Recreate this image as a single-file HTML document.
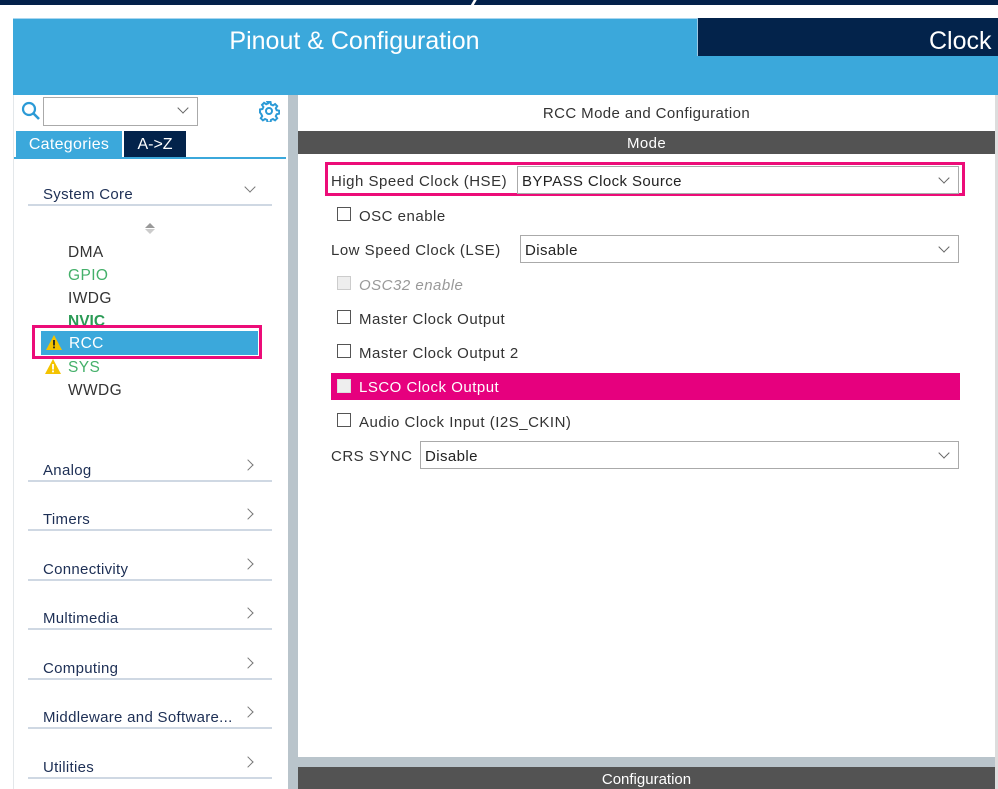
<!DOCTYPE html>
<html><head><meta charset="utf-8"><style>
*{margin:0;padding:0;box-sizing:border-box}
body{width:998px;height:789px;overflow:hidden;background:#fff;font-family:"Liberation Sans",sans-serif;position:relative}
.a{position:absolute}
.cat{position:absolute;left:28px;width:244px;height:26px;border-bottom:2px solid #cfd8e3;color:#1d2f55;font-size:15px;letter-spacing:.3px}
.cat span{position:absolute;left:15px;bottom:1px}
.cat i{position:absolute;right:20px;bottom:11px;width:8px;height:8px;border-right:1.3px solid #777;border-top:1.3px solid #777;transform:rotate(45deg)}
.chk{position:absolute;width:14px;height:14px;border:1.3px solid #555;background:#fff}
.lbl{position:absolute;font-size:15px;color:#333;letter-spacing:.5px}
.sel{position:absolute;height:28px;border:1px solid #aaa;background:#fff;font-size:15px;color:#222;padding:6px 0 0 4px;letter-spacing:.4px}
.sel i{position:absolute;right:10px;top:7px;width:8px;height:8px;border-right:1.3px solid #666;border-bottom:1.3px solid #666;transform:rotate(45deg)}
</style></head><body>
<div class="a" style="left:0;top:0;width:998px;height:5px;background:#03214a"></div>
<div class="a" style="left:472px;top:0;width:3px;height:6px;background:#fff;transform:skewX(-30deg)"></div>
<div class="a" style="left:13px;top:18px;width:985px;height:77px;background:#3ba8db;border-top:1px solid #a8d6ef"></div>
<div class="a" style="left:13px;top:27px;width:683px;text-align:center;color:#fff;font-size:25px">Pinout &amp; Configuration</div>
<div class="a" style="left:697px;top:18px;width:301px;height:38px;background:#03234b;border-left:1px solid #9fc9e3"></div>
<div class="a" style="left:929px;top:27px;color:#fff;font-size:25px">Clock</div>

<div class="a" style="left:13px;top:95px;width:275px;height:694px;background:#fff;border-left:1px solid #e3e7ea"></div>
<svg class="a" style="left:21px;top:101px" width="20" height="20" viewBox="0 0 20 20"><circle cx="8" cy="8" r="6" fill="none" stroke="#2b9ad6" stroke-width="2.2"/><line x1="12.5" y1="12.5" x2="18" y2="18" stroke="#2b9ad6" stroke-width="2.6"/></svg>
<div class="a" style="left:43px;top:97px;width:155px;height:29px;border:1px solid #aaa;background:#fff"></div>
<div class="a" style="left:179px;top:104px;width:8px;height:8px;border-right:1.3px solid #666;border-bottom:1.3px solid #666;transform:rotate(45deg)"></div>
<svg class="a" style="left:258px;top:100px" width="22" height="22" viewBox="0 0 22 22"><g fill="none" stroke="#2b9ad6" stroke-width="2"><circle cx="11" cy="11" r="3"/><path d="M9.5 2h3l.5 2.5 2 .9 2.1-1.4 2.1 2.1-1.4 2.1.9 2 2.5.5v3l-2.5.5-.9 2 1.4 2.1-2.1 2.1-2.1-1.4-2 .9-.5 2.5h-3l-.5-2.5-2-.9-2.1 1.4-2.1-2.1 1.4-2.1-.9-2L2 12.5v-3l2.5-.5.9-2L4 4.9 6.1 2.8l2.1 1.4 2-.9z"/></g></svg>
<div class="a" style="left:16px;top:131px;width:106px;height:26px;background:#3ba8db;color:#fff;font-size:16px;text-align:center;padding-top:5px;letter-spacing:.3px">Categories</div>
<div class="a" style="left:124px;top:131px;width:62px;height:26px;background:#03234b;color:#fff;font-size:16px;text-align:center;padding-top:5px">A-&gt;Z</div>
<div class="a" style="left:14px;top:157px;width:272px;height:2px;background:#3ba8db"></div>

<div class="cat" style="top:180px"><span>System Core</span><i style="transform:rotate(135deg);bottom:13px;right:18px"></i></div>
<div class="a" style="left:145px;top:223px;width:0;height:0;border-left:5px solid transparent;border-right:5px solid transparent;border-bottom:5px solid #999"></div>
<div class="a" style="left:145px;top:229px;width:0;height:0;border-left:5px solid transparent;border-right:5px solid transparent;border-top:5px solid #ccc"></div>
<div class="a" style="left:68px;top:244px;font-size:15.5px;color:#333;letter-spacing:.4px">DMA</div>
<div class="a" style="left:68px;top:267px;font-size:15.5px;color:#44b06a;letter-spacing:.4px">GPIO</div>
<div class="a" style="left:68px;top:290px;font-size:15.5px;color:#333;letter-spacing:.4px">IWDG</div>
<div class="a" style="left:68px;top:313px;font-size:15.5px;color:#2a9a55;font-weight:bold;text-decoration:underline">NVIC</div>
<div class="a" style="left:32px;top:325px;width:230px;height:34px;border:3px solid #ec0c78"></div>
<div class="a" style="left:41px;top:331px;width:217px;height:24px;background:#3ba8db"></div>
<svg class="a" style="left:45px;top:334px" width="18" height="17" viewBox="0 0 18 17"><path d="M9 1L17 16H1z" fill="#f4c300"/><rect x="8.1" y="6" width="1.8" height="5.5" fill="#222"/><rect x="8.1" y="12.5" width="1.8" height="1.8" fill="#222"/></svg>
<div class="a" style="left:69px;top:335px;font-size:15.5px;color:#fff;letter-spacing:.4px">RCC</div>
<svg class="a" style="left:44px;top:358px" width="18" height="17" viewBox="0 0 18 17"><path d="M9 1L17 16H1z" fill="#f4c300"/><rect x="8.1" y="6" width="1.8" height="5.5" fill="#fff"/><rect x="8.1" y="12.5" width="1.8" height="1.8" fill="#fff"/></svg>
<div class="a" style="left:68px;top:359px;font-size:15.5px;color:#44b06a;letter-spacing:.4px">SYS</div>
<div class="a" style="left:68px;top:382px;font-size:15.5px;color:#333;letter-spacing:.4px">WWDG</div>

<div class="cat" style="top:456px"><span>Analog</span><i></i></div>
<div class="cat" style="top:505px"><span>Timers</span><i></i></div>
<div class="cat" style="top:555px"><span>Connectivity</span><i></i></div>
<div class="cat" style="top:604px"><span>Multimedia</span><i></i></div>
<div class="cat" style="top:654px"><span>Computing</span><i></i></div>
<div class="cat" style="top:703px"><span>Middleware and Software...</span><i></i></div>
<div class="cat" style="top:753px"><span>Utilities</span><i></i></div>

<div class="a" style="left:288px;top:95px;width:10px;height:694px;background:#b9c4cb"></div>
<div class="a" style="left:298px;top:95px;width:697px;height:662px;background:#fff"></div>
<div class="a" style="left:995px;top:95px;width:3px;height:694px;background:#ddd"></div>
<div class="a" style="left:298px;top:105px;width:697px;text-align:center;font-size:15px;color:#333;letter-spacing:.4px">RCC Mode and Configuration</div>
<div class="a" style="left:298px;top:131px;width:697px;height:23px;background:#535353;color:#fff;font-size:15px;text-align:center;padding-top:4px;letter-spacing:.4px">Mode</div>

<div class="a" style="left:325px;top:162px;width:640px;height:34px;border:3px solid #ec0c78"></div>
<div class="lbl" style="left:331px;top:173px">High Speed Clock (HSE)</div>
<div class="sel" style="left:517px;top:166px;width:442px">BYPASS Clock Source<i></i></div>

<div class="chk" style="left:337px;top:207px"></div><div class="lbl" style="left:359px;top:208px">OSC enable</div>
<div class="lbl" style="left:331px;top:242px">Low Speed Clock (LSE)</div>
<div class="sel" style="left:520px;top:235px;width:439px">Disable<i></i></div>
<div class="chk" style="left:337px;top:276px;border-color:#ccc;background:#eee"></div><div class="lbl" style="left:359px;top:277px;color:#999;font-style:italic">OSC32 enable</div>
<div class="chk" style="left:337px;top:310px"></div><div class="lbl" style="left:359px;top:311px">Master Clock Output</div>
<div class="chk" style="left:337px;top:344px"></div><div class="lbl" style="left:359px;top:345px">Master Clock Output 2</div>
<div class="a" style="left:331px;top:373px;width:629px;height:27px;background:#e6007e"></div>
<div class="chk" style="left:337px;top:379px;border-color:#ddd;background:#eee"></div><div class="lbl" style="left:359px;top:379px;color:#fff">LSCO Clock Output</div>
<div class="chk" style="left:337px;top:413px"></div><div class="lbl" style="left:359px;top:414px">Audio Clock Input (I2S_CKIN)</div>
<div class="lbl" style="left:331px;top:448px">CRS SYNC</div>
<div class="sel" style="left:420px;top:441px;width:539px">Disable<i></i></div>

<div class="a" style="left:298px;top:757px;width:697px;height:10px;background:#b9c4cb"></div>
<div class="a" style="left:298px;top:767px;width:697px;height:22px;background:#535353;color:#fff;font-size:15px;text-align:center;padding-top:4px">Configuration</div>
</body></html>
